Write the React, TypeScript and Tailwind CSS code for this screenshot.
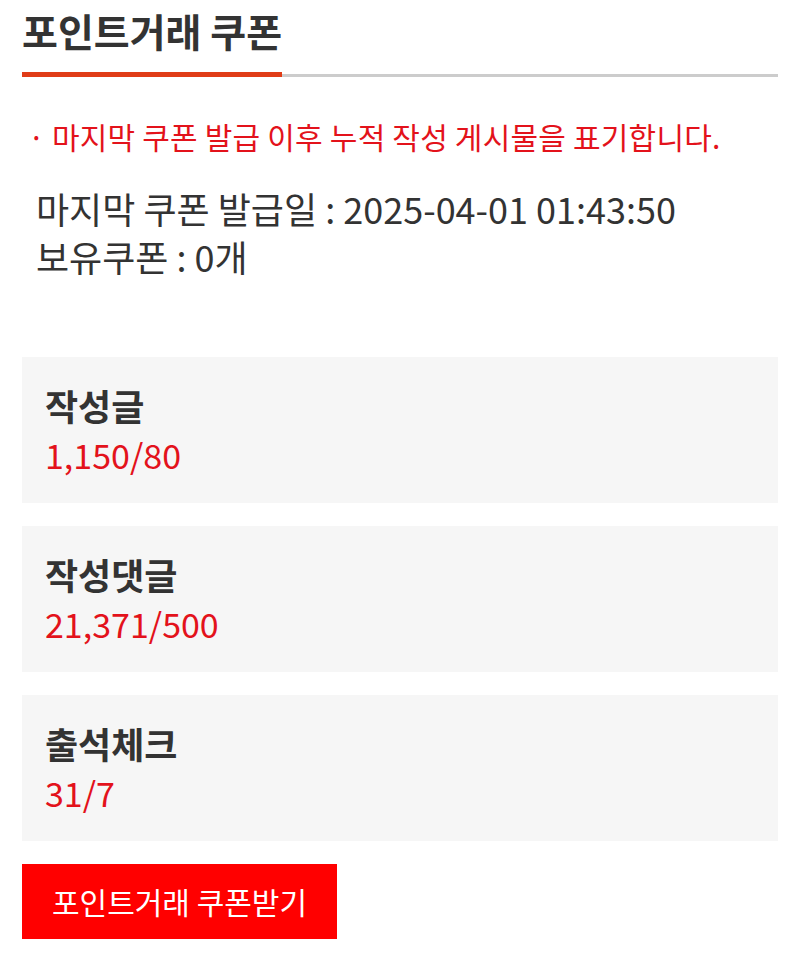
import React from 'react';

const stats = [
  { label: '작성글', value: '1,150/80' },
  { label: '작성댓글', value: '21,371/500' },
  { label: '출석체크', value: '31/7' },
];

export default function App() {
  return (
    <div
      className="min-h-screen bg-white px-[22px]"
      style={{ fontFamily: '"Noto Sans CJK KR", "Noto Sans", sans-serif' }}
    >
      {/* Title with tab underline */}
      <div className="flex border-b-[3px] border-[#cccccc]">
        <h1 className="-mb-[3px] w-[260px] border-b-[5px] border-[#e03c17] pt-[4px] pb-[16px] text-[39px] font-bold leading-[52px] text-[#333333]">
          포인트거래 쿠폰
        </h1>
      </div>

      <p className="mt-[39px] pl-[6px] text-[30px] leading-[40px] tracking-[0.2px] text-[#e3121b]">
        · 마지막 쿠폰 발급 이후 누적 작성 게시물을 표기합니다.
      </p>

      <div className="mt-[28px] pl-[14px] text-[36px] leading-[48px] text-[#333333]">
        <p>마지막 쿠폰 발급일 : 2025-04-01 01:43:50</p>
        <p>보유쿠폰 : 0개</p>
      </div>

      <div className="mt-[77px] flex flex-col gap-[23px]">
        {stats.map((s) => (
          <div key={s.label} className="flex h-[146px] flex-col bg-[#f6f6f6] px-[23px] pt-[26px]">
            <div className="text-[36px] font-bold leading-[44px] text-[#333333]">{s.label}</div>
            <div className="mt-[6px] text-[34px] leading-[44px] text-[#e3121b]">{s.value}</div>
          </div>
        ))}
      </div>

      <button className="mt-[23px] flex h-[75px] w-[315px] items-center justify-center bg-[#ff0000] text-[30px] text-white">
        포인트거래 쿠폰받기
      </button>
    </div>
  );
}
